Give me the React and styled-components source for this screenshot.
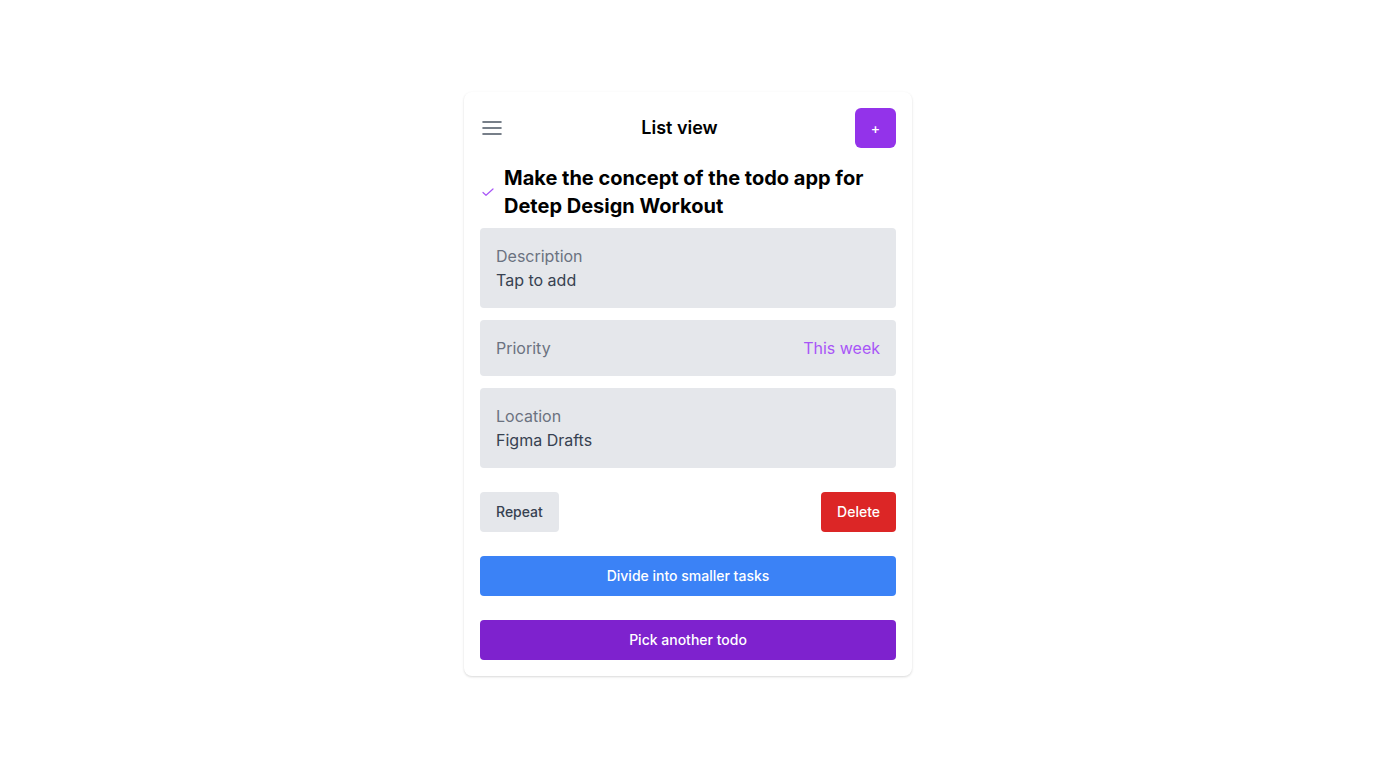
import styled, { createGlobalStyle } from 'styled-components';

const Global = createGlobalStyle`
  html, body { margin: 0; padding: 0; background: #fff; }
  body { font-family: Inter, "Noto Sans", sans-serif; }
  * { box-sizing: border-box; }
`

const Page = styled.div`
  min-height: 768px;
  display: flex;
  align-items: center;
  justify-content: center;
`

const Card = styled.div`
  width: 448px;
  background: #fff;
  border-radius: 8px;
  padding: 16px;
  box-shadow: 0 1px 3px rgba(0,0,0,0.1), 0 1px 2px rgba(0,0,0,0.06);
  display: flex;
  flex-direction: column;
`

const Header = styled.div`
  display: flex;
  align-items: center;
  justify-content: space-between;
  height: 40px;
  margin-bottom: 16px;
`

const MenuBtn = styled.button`
  border: 0;
  background: none;
  padding: 0;
  width: 24px;
  height: 24px;
  display: flex;
  align-items: center;
  justify-content: center;
  color: #4b5563;
`

const HeaderTitle = styled.h1`
  margin: 0;
  font-size: 18px;
  line-height: 28px;
  font-weight: 600;
  color: #000;
`

const PlusBtn = styled.button`
  width: 41px;
  height: 40px;
  border: 0;
  border-radius: 6px;
  background: #9333ea;
  color: #fff;
  font-family: Inter, sans-serif;
  font-size: 14px;
  font-weight: 500;
`

const TaskRow = styled.div`
  display: flex;
  align-items: center;
  gap: 8px;
  margin-bottom: 8px;

  svg { flex-shrink: 0; }
`

const TaskTitle = styled.h2`
  margin: 0;
  font-size: 20px;
  line-height: 28px;
  font-weight: 700;
  color: #000;
`

const Field = styled.div`
  background: #e5e7eb;
  border-radius: 4px;
  padding: 16px;
  margin-bottom: 12px;
  display: flex;
  flex-direction: ${p => (p.$inline ? 'row' : 'column')};
  justify-content: ${p => (p.$inline ? 'space-between' : 'flex-start')};
  font-size: 16px;
  line-height: 24px;
`

const Label = styled.span`
  color: #6b7280;
`

const Value = styled.span`
  color: ${p => p.$accent ? '#a855f7' : '#374151'};
`

const Actions = styled.div`
  display: flex;
  justify-content: space-between;
  margin-top: 12px;
  margin-bottom: 24px;
`

const Btn = styled.button`
  height: 40px;
  border: 0;
  border-radius: 4px;
  padding: 0 16px 1px;
  font-family: Inter, sans-serif;
  font-size: 14px;
  font-weight: 500;
  background: ${p => p.$bg};
  color: ${p => p.$fg || '#fff'};
  width: ${p => (p.$full ? '100%' : 'auto')};
  margin-bottom: ${p => p.$mb || 0}px;
`

const App = () => {
  return (
    <>
      <Global />
      <Page>
        <Card>
          <Header>
            <MenuBtn>
              <svg width="20" height="16" viewBox="0 0 20 16" fill="none" stroke="#4b5563" strokeWidth="1.6" strokeLinecap="round">
                <path d="M1 2h18M1 8h18M1 14h18" />
              </svg>
            </MenuBtn>
            <HeaderTitle>List view</HeaderTitle>
            <PlusBtn>+</PlusBtn>
          </Header>
          <TaskRow>
            <svg width="16" height="16" viewBox="0 0 16 16" fill="none" stroke="#a855f7" strokeWidth="1.2" strokeLinecap="round" strokeLinejoin="round">
              <path d="M3 8.5l3 2.8L13 5" />
            </svg>
            <TaskTitle>Make the concept of the todo app for Detep Design Workout</TaskTitle>
          </TaskRow>
          <Field>
            <Label>Description</Label>
            <Value>Tap to add</Value>
          </Field>
          <Field $inline>
            <Label>Priority</Label>
            <Value $accent>This week</Value>
          </Field>
          <Field>
            <Label>Location</Label>
            <Value>Figma Drafts</Value>
          </Field>
          <Actions>
            <Btn $bg="#e5e7eb" $fg="#374151">Repeat</Btn>
            <Btn $bg="#dc2626">Delete</Btn>
          </Actions>
          <Btn $full $bg="#3b82f6" $mb={24}>Divide into smaller tasks</Btn>
          <Btn $full $bg="#7e22ce">Pick another todo</Btn>
        </Card>
      </Page>
    </>
  )
}

export default App
